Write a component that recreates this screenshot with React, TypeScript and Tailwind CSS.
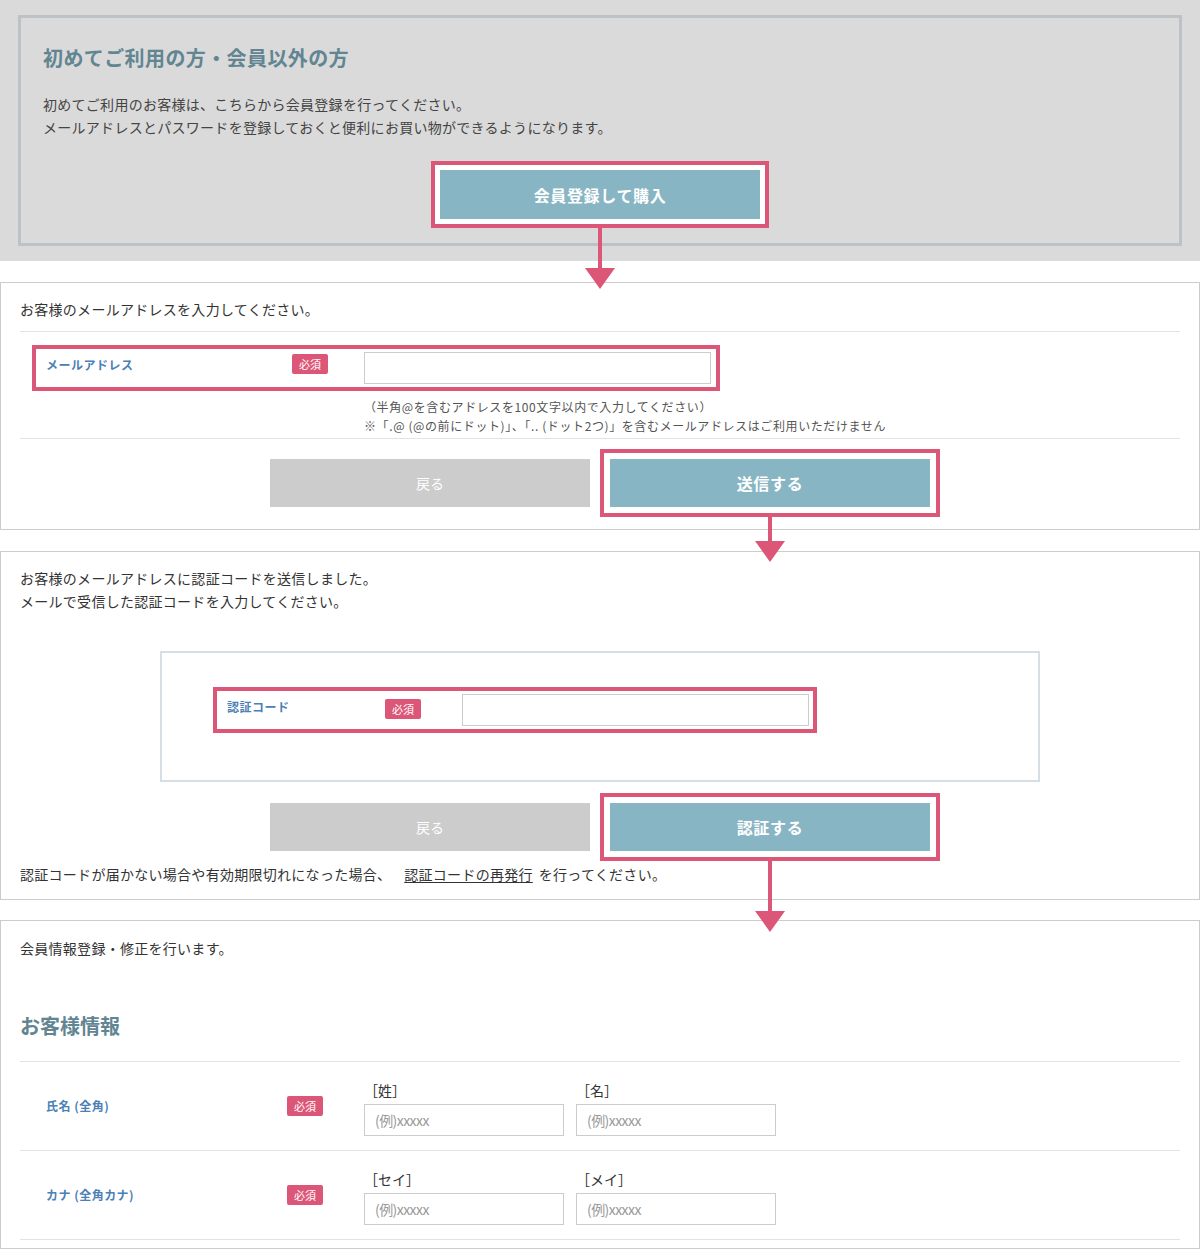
import type { ReactNode } from "react";

const FONT = { fontFamily: '"Noto Sans CJK JP", "Noto Sans", sans-serif' };

function Badge() {
  return (
    <span className="flex h-[20px] w-[36px] items-center justify-center rounded-[2px] bg-[#dc5677] text-[11px] leading-none text-white">
      必須
    </span>
  );
}

// pink annotation box + optional arrow pointing to the next step
function Highlight({
  children,
  arrow,
  pad = "p-[6px]",
}: {
  children: ReactNode;
  arrow?: number;
  pad?: string;
}) {
  return (
    <div className={`relative border-4 border-[#dc5677] bg-white ${pad}`}>
      {children}
      {arrow && (
        <div className="absolute left-1/2 top-full z-10 flex -translate-x-1/2 flex-col items-center">
          <div className="w-[4px] bg-[#dc5677]" style={{ height: arrow - 20 }} />
          <svg width="30" height="21" viewBox="0 0 30 21" className="-mt-px">
            <path d="M0 0 H30 L15 21 Z" fill="#dc5677" />
          </svg>
        </div>
      )}
    </div>
  );
}

function TealButton({ label }: { label: string }) {
  return (
    <div className="flex h-[48px] w-[320px] items-center justify-center bg-[#88b5c3] text-[16px] font-bold tracking-[0.04em] text-white">
      {label}
    </div>
  );
}

function BackButton() {
  return (
    <div className="flex h-[48px] w-[320px] items-center justify-center bg-[#cccccc] text-[14px] text-white">
      戻る
    </div>
  );
}

function ButtonRow({ label, arrow }: { label: string; arrow: number }) {
  return (
    <div className="flex items-center justify-center gap-[10px] pl-[10px]">
      <BackButton />
      <Highlight arrow={arrow} pad="p-[6px]">
        <TealButton label={label} />
      </Highlight>
    </div>
  );
}

function TextInput({ w, placeholder }: { w: string; placeholder?: string }) {
  return (
    <div className={`flex h-[32px] items-center border border-[#cccccc] bg-white px-[10px] text-[14px] text-[#999] ${w}`}>
      {placeholder && <span className="tracking-[-0.04em]">{placeholder}</span>}
    </div>
  );
}

function NameRow({ label, first, last }: { label: string; first: string; last: string }) {
  return (
    <div className="flex h-[89px] items-center border-b border-[#e3e3e3]">
      <div className="w-[267px] pl-[26px] text-[12px] font-bold tracking-[0.04em] text-[#4a80b6]">{label}</div>
      <div className="w-[77px]">
        <Badge />
      </div>
      <div className="flex gap-[12px] pt-[4px]">
        {[first, last].map((t) => (
          <div key={t} className="flex flex-col gap-[4px]">
            <div className="text-[14px] leading-[20px] text-[#333]">{t}</div>
            <TextInput w="w-[200px]" placeholder="(例)xxxxx" />
          </div>
        ))}
      </div>
    </div>
  );
}

export default function App() {
  return (
    <div className="w-[1200px] bg-white text-[#333]" style={FONT}>
      {/* Step 1 */}
      <section className="bg-[#dadada] px-[18px] py-[15px]">
        <div className="h-[231px] border-[3px] border-[#bcc2c6] pl-[22px] pt-[26px]">
          <h2 className="text-[20px] font-bold leading-[28px] tracking-[0.02em] text-[#628592]">
            初めてご利用の方・会員以外の方
          </h2>
          <p className="mt-[21px] text-[14px] leading-[23px] tracking-[0.02em] text-[#444]">
            初めてご利用のお客様は、こちらから会員登録を行ってください。
            <br />
            メールアドレスとパスワードを登録しておくと便利にお買い物ができるようになります。
          </p>
          <div className="mt-[22px] flex justify-center pr-[22px]">
            <Highlight arrow={65} pad="p-[5px]">
              <div className="flex h-[49px] w-[320px] items-center justify-center bg-[#88b5c3] text-[16px] font-bold tracking-[0.04em] text-white">
                会員登録して購入
              </div>
            </Highlight>
          </div>
        </div>
      </section>

      {/* Step 2 */}
      <section className="mt-[21px] h-[248px] border border-[#cccccc] px-[19px] pt-[15px]">
        <p className="text-[14px] leading-[22px] tracking-[0.02em]">お客様のメールアドレスを入力してください。</p>
        <div className="mt-[11px] border-t border-[#e3e3e3] pt-[13px]">
          <div className="ml-[12px] flex h-[46px] w-[688px] items-start border-4 border-[#dc5677] pt-[3px]">
            <div className="w-[256px] pl-[10px] pt-[4px] text-[12px] font-bold leading-[18px] tracking-[0.04em] text-[#4a80b6]">
              メールアドレス
            </div>
            <div className="w-[72px] pt-[2px]">
              <Badge />
            </div>
            <TextInput w="w-[347px]" />
          </div>
          <div className="mt-[6px] pl-[344px] text-[12px] leading-[19px] tracking-[0.05em] text-[#555]">
            <div>（半角@を含むアドレスを100文字以内で入力してください）</div>
            <div>※「.@ (@の前にドット)」、「.. (ドット2つ)」を含むメールアドレスはご利用いただけません</div>
          </div>
        </div>
        <div className="mt-[3px] border-t border-[#e3e3e3] pt-[10px]">
          <ButtonRow label="送信する" arrow={49} />
        </div>
      </section>

      {/* Step 3 */}
      <section className="mt-[21px] h-[349px] border border-[#cccccc] px-[19px] pt-[15px]">
        <p className="text-[14px] leading-[23px] tracking-[0.02em]">
          お客様のメールアドレスに認証コードを送信しました。
          <br />
          メールで受信した認証コードを入力してください。
        </p>
        <div className="mx-auto mt-[38px] h-[131px] w-[880px] border-2 border-[#d6dfe5] pl-[51px] pt-[34px]">
          <div className="flex h-[46px] w-[604px] items-start border-4 border-[#dc5677] pt-[3px]">
            <div className="w-[168px] pl-[10px] pt-[4px] text-[12px] font-bold leading-[18px] tracking-[0.04em] text-[#4a80b6]">
              認証コード
            </div>
            <div className="w-[77px] pt-[5px]">
              <Badge />
            </div>
            <TextInput w="w-[347px]" />
          </div>
        </div>
        <div className="mt-[11px]">
          <ButtonRow label="認証する" arrow={75} />
        </div>
        <p className="mt-[2px] text-[14px] leading-[22px] tracking-[0.02em]">
          認証コードが届かない場合や有効期限切れになった場合、
          <span className="ml-[13px] mr-[6px] underline underline-offset-2">認証コードの再発行</span>
          を行ってください。
        </p>
      </section>

      {/* Step 4 */}
      <section className="mt-[20px] h-[329px] border border-[#cccccc] px-[19px] pt-[16px]">
        <p className="text-[14px] leading-[22px] tracking-[0.02em]">会員情報登録・修正を行います。</p>
        <h2 className="mt-[53px] text-[20px] font-bold leading-[28px] text-[#628592]">お客様情報</h2>
        <div className="mt-[21px] border-t border-[#e3e3e3]">
          <NameRow label="氏名 (全角)" first="［姓］" last="［名］" />
          <NameRow label="カナ (全角カナ)" first="［セイ］" last="［メイ］" />
        </div>
      </section>
    </div>
  );
}
